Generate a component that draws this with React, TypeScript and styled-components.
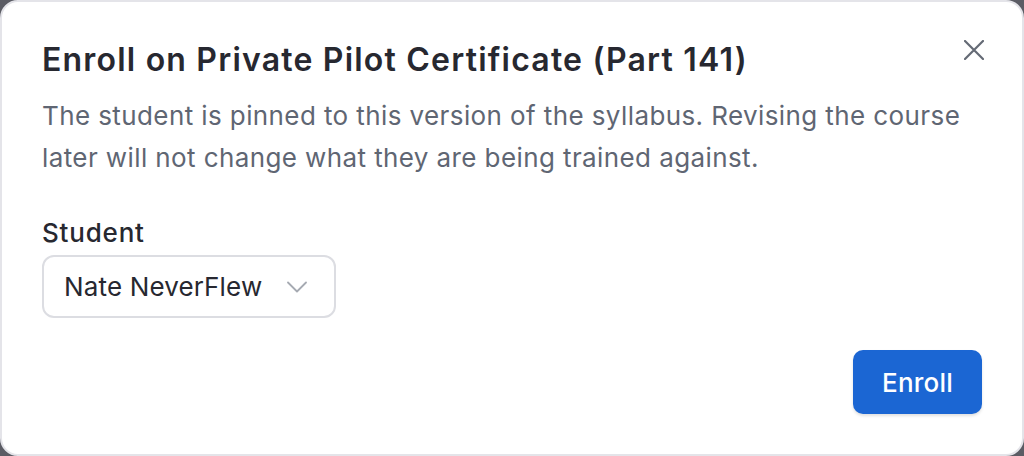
import styled, { createGlobalStyle } from 'styled-components';

const GlobalStyle = createGlobalStyle`
  html, body {
    margin: 0;
    padding: 0;
    background: #5b5c64;
    font-family: Inter, "Noto Sans", "Liberation Sans", sans-serif;
  }
`;

const Dialog = styled.div`
  box-sizing: border-box;
  width: 1024px;
  height: 456px;
  background: #ffffff;
  border: 2px solid #e4e4e9;
  border-radius: 18px;
  padding: 36px 40px 40px 40px;
  display: flex;
  flex-direction: column;
`;

const Header = styled.div`
  display: flex;
  justify-content: space-between;
  align-items: flex-start;
`;

const Title = styled.h2`
  margin: 0;
  font-size: 32px;
  line-height: 44px;
  font-weight: 600;
  color: #272830;
  letter-spacing: 1.2px;
`;

const CloseButton = styled.button`
  border: none;
  background: none;
  padding: 0;
  margin: 0 -4px 0 0;
  width: 24px;
  height: 24px;
  display: flex;
  align-items: center;
  justify-content: center;
  color: #646a75;
  cursor: pointer;
`;

const Description = styled.p`
  margin: 13px 0 0;
  font-size: 26px;
  line-height: 42px;
  letter-spacing: 0.4px;
  color: #5f6673;
  max-width: 935px;
`;

const Field = styled.div`
  margin-top: 36px;
  display: flex;
  flex-direction: column;
  align-items: flex-start;
`;

const Label = styled.label`
  font-size: 26px;
  line-height: 36px;
  font-weight: 500;
  letter-spacing: 0.8px;
  color: #272830;
`;

const Select = styled.button`
  margin-top: 4px;
  box-sizing: border-box;
  height: 63px;
  padding: 0 27px 0 20px;
  display: flex;
  align-items: center;
  gap: 25px;
  background: #fff;
  border: 2px solid #dcdde2;
  border-radius: 12px;
  font-family: inherit;
  font-size: 26px;
  letter-spacing: 0.15px;
  color: #272830;
  cursor: pointer;
`;

const Footer = styled.div`
  margin-top: auto;
  display: flex;
  justify-content: flex-end;
`;

const PrimaryButton = styled.button`
  box-sizing: border-box;
  height: 64px;
  padding: 0 29px;
  background: #1b66d3;
  color: #fff;
  border: none;
  border-radius: 10px;
  font-family: inherit;
  font-size: 26px;
  font-weight: 500;
  letter-spacing: 0.2px;
  box-shadow: 0 2px 3px rgba(0, 0, 0, 0.12);
  cursor: pointer;
`;

export default function App() {
  return (
    <>
      <GlobalStyle />
      <Dialog>
        <Header>
          <Title>Enroll on Private Pilot Certificate (Part 141)</Title>
          <CloseButton aria-label="Close">
            <svg width="20" height="20" viewBox="0 0 20 20" fill="none" stroke="currentColor" strokeWidth="2.2" strokeLinecap="round">
              <path d="M1 1L19 19M19 1L1 19" />
            </svg>
          </CloseButton>
        </Header>
        <Description>
          The student is pinned to this version of the syllabus. Revising the course later will not change what they are being trained against.
        </Description>
        <Field>
          <Label>Student</Label>
          <Select>
            Nate NeverFlew
            <svg width="20" height="12" viewBox="0 0 20 12" fill="none" stroke="#a6aab2" strokeWidth="1.8" strokeLinecap="round" strokeLinejoin="round">
              <path d="M1 1.5L10 10.5L19 1.5" />
            </svg>
          </Select>
        </Field>
        <Footer>
          <PrimaryButton>Enroll</PrimaryButton>
        </Footer>
      </Dialog>
    </>
  );
}
